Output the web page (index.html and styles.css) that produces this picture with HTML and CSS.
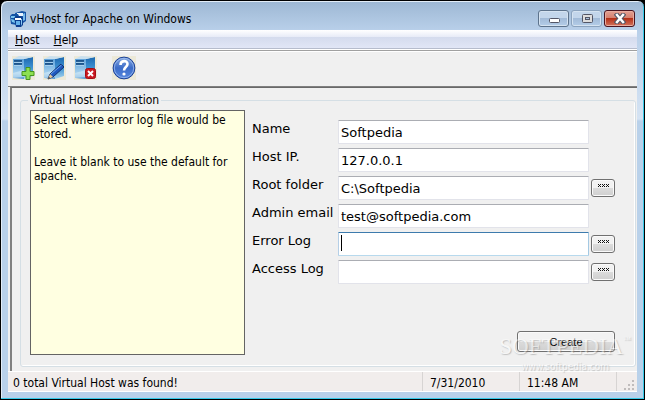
FILE: index.html
```
<!DOCTYPE html>
<html lang="en">
<head>
    <meta charset="UTF-8">
    <meta name="viewport" content="width=device-width, initial-scale=1.0">
    <title>vHost for Apache on Windows</title>
    <link rel="stylesheet" href="styles.css">
</head>
<body>
    <svg width="0" height="0" class="defs" aria-hidden="true">
        <defs>
            <linearGradient id="front" x1="0" y1="0" x2="0" y2="1">
                <stop offset="0" stop-color="#5fa3da"/>
                <stop offset=".7" stop-color="#a5d0ee"/>
                <stop offset="1" stop-color="#4d93cf"/>
            </linearGradient>
            <linearGradient id="side" x1="0" y1="0" x2="0" y2="1">
                <stop offset="0" stop-color="#1c68b0"/>
                <stop offset=".5" stop-color="#3f93d3"/>
                <stop offset="1" stop-color="#a9d5ef"/>
            </linearGradient>
            <linearGradient id="ball" x1="0" y1="0" x2="0" y2="1">
                <stop offset="0" stop-color="#87a9e0"/>
                <stop offset=".5" stop-color="#3c6cc8"/>
                <stop offset="1" stop-color="#5688df"/>
            </linearGradient>
            <g id="server">
                <path d="M1 3h11v20L1 22z" fill="url(#front)"/>
                <path d="M12 3l9-2v19l-9 3z" fill="url(#side)"/>
                <path d="M1 3l6-3 14 1-9 2z" fill="#c9dfee"/>
                <path d="M2 5h8M2 8h8" stroke="#1c568f" stroke-width="1.8"/>
                <path d="M2 6.4h8M2 9.4h8" stroke="#b9dcf3" stroke-width=".8"/>
                <path d="M1 17l11-3v7l-11 1z" fill="#d4ebf9" opacity=".6"/>
            </g>
        </defs>
    </svg>
    <div class="window">
        <div class="titlebar">
            <svg class="app-icon" width="16" height="16" viewBox="0 0 16 16">
                <path d="M5 2l7-2 4 1v9l-3 2H6z" fill="#1453a5"/>
                <path d="M7 2h6v3H7z" fill="#e8f4ff"/>
                <path d="M13 3l2-1v7l-2 1z" fill="#78b9ea"/>
                <path d="M0 5l2-2h6l1 2v8l-2 1-6-1z" fill="#1453a5"/>
                <path d="M1 5h4v2H1zM1 8l4 1v3l-3-1z" fill="#79c4ee"/>
                <path d="M4 7l2-2h5l2 2v7l-2 2H6z" fill="#0b3d8f"/>
                <path d="M5 7h6v2H5z" fill="#fff"/>
                <path d="M6 10h4v4H6z" fill="#63b0ea"/>
                <path d="M11 8h1v5l-1 2z" fill="#87c9f4"/>
            </svg>
            <h1>vHost for Apache on Windows</h1>
            <div class="window-controls">
                <button type="button" aria-label="Minimize">
                    <svg width="12" height="11" viewBox="0 0 12 11"><rect x="1.5" y="5.5" width="10" height="4" rx="1" fill="#fff" stroke="#535666"/></svg>
                </button>
                <button type="button" class="maximize" aria-label="Maximize">
                    <svg width="12" height="11" viewBox="0 0 12 11"><rect x="1.5" y="1.5" width="10" height="8" rx="1" fill="#ddd" stroke="#535666"/><rect x="4.5" y="4.5" width="4" height="2" fill="#a9c0db" stroke="#535666"/></svg>
                </button>
                <button type="button" class="close" aria-label="Close">
                    <svg width="12" height="11" viewBox="0 0 12 11"><path d="M3 2l6 7M9 2L3 9" stroke="#535666" stroke-width="4.6" stroke-linecap="square"/><path d="M3 2l6 7M9 2L3 9" stroke="#fff" stroke-width="2.5" stroke-linecap="square"/></svg>
                </button>
            </div>
        </div>

        <div class="client">
            <nav class="menubar">
                <a href="#host"><u>H</u>ost</a>
                <a href="#help"><u>H</u>elp</a>
            </nav>
            <div class="toolbar">
                <button type="button" aria-label="Add host">
                    <svg width="23" height="24" viewBox="0 0 23 24"><use href="#server"/><path d="M14 11.5h4v4h4v4h-4v4h-4v-4h-4v-4h4z" fill="#8de052" stroke="#46941f"/></svg>
                </button>
                <button type="button" aria-label="Edit host">
                    <svg width="23" height="24" viewBox="0 0 23 24"><use href="#server"/><path d="M5 23l2-5L18 8l3 3L10 21z" fill="#1e57bd" stroke="#123270"/><path d="M8 18L18.500 9" stroke="#6ba5f1"/><path d="M5 23l2-5 3 3z" fill="#e9c794"/><path d="M5 23l1-2 1 1z" fill="#222"/></svg>
                </button>
                <button type="button" aria-label="Delete host">
                    <svg width="23" height="24" viewBox="0 0 23 24"><use href="#server"/><rect x="11.500" y="12.500" width="10" height="10" rx="2" fill="#c9191f" stroke="#a30d12"/><path d="M14 15l5 5M19 15l-5 5" stroke="#fff" stroke-width="2"/></svg>
                </button>
                <button type="button" class="help" aria-label="About">
                    <svg width="24" height="24" viewBox="0 0 24 24"><circle cx="12" cy="12" r="10.900" fill="url(#ball)" stroke="#1b3f93"/><circle cx="12" cy="12" r="9.700" fill="none" stroke="#9dbcf0" stroke-width=".8"/><path d="M8.500 9c0-5 7-5 7-1 0 3-3.500 3-3.500 6.500" fill="none" stroke="#fff" stroke-width="2.600"/><circle cx="12" cy="18" r="1.600" fill="#fff"/></svg>
                </button>
            </div>

            <main class="panel">
                <fieldset>
                    <legend>Virtual Host Information</legend>
                    <div class="hint">
                        <p>Select where error log file would be stored.</p>
                        <p>Leave it blank to use the default for apache.</p>
                    </div>
                    <form class="host-form">
                        <div class="row">
                            <label for="name">Name</label>
                            <input type="text" id="name" value="Softpedia">
                        </div>
                        <div class="row">
                            <label for="ip">Host IP.</label>
                            <input type="text" id="ip" value="127.0.0.1">
                        </div>
                        <div class="row">
                            <label for="root">Root folder</label>
                            <input type="text" id="root" value="C:\Softpedia">
                            <button type="button" class="browse" aria-label="Browse root folder"><svg width="11" height="3" viewBox="0 0 11 3"><path d="M0 0l3 3M3 0L0 3M4 0l3 3M7 0L4 3M8 0l3 3M11 0L8 3" stroke="#111"/></svg></button>
                        </div>
                        <div class="row">
                            <label for="email">Admin email</label>
                            <input type="text" id="email" value="test@softpedia.com">
                        </div>
                        <div class="row focused">
                            <label for="error-log">Error Log</label>
                            <input type="text" id="error-log">
                            <button type="button" class="browse" aria-label="Browse error log"><svg width="11" height="3" viewBox="0 0 11 3"><path d="M0 0l3 3M3 0L0 3M4 0l3 3M7 0L4 3M8 0l3 3M11 0L8 3" stroke="#111"/></svg></button>
                        </div>
                        <div class="row">
                            <label for="access-log">Access Log</label>
                            <input type="text" id="access-log">
                            <button type="button" class="browse" aria-label="Browse access log"><svg width="11" height="3" viewBox="0 0 11 3"><path d="M0 0l3 3M3 0L0 3M4 0l3 3M7 0L4 3M8 0l3 3M11 0L8 3" stroke="#111"/></svg></button>
                        </div>
                        <button type="button" class="create">Create</button>
                    </form>
                </fieldset>
            </main>

            <footer class="statusbar">
                <span class="message">0 total Virtual Host was found!</span>
                <span>7/31/2010</span>
                <span>11:48 AM</span>
                <svg class="grip" width="20" height="20" viewBox="0 0 20 20"><path d="M15 8h2v2h-2zM15 12h2v2h-2zM11 12h2v2h-2zM15 16h2v2h-2zM11 16h2v2h-2zM7 16h2v2H7z" fill="#c0bcbc"/></svg>
            </footer>
        </div>
        <div class="watermark">
            <div class="brand">SOFTPEDIA<sup>™</sup></div>
            <div class="site">www.softpedia.com</div>
        </div>
    </div>
</body>
</html>
```
FILE: styles.css
```
* {
    box-sizing: border-box;
}
body {
    margin: 0;
    background: #000;
    font-family: "DejaVu Sans Condensed", "DejaVu Sans", Tahoma, sans-serif;
    font-size: 12px;
    color: #000;
}
button {
    padding: 0;
    font: inherit;
}
.defs {
    position: absolute;
}
.window {
    position: relative;
    display: flex;
    flex-direction: column;
    min-height: 100vh;
    padding: 0 7px 7px;
    border: 1px solid #000;
    border-radius: 7px 7px 0 0;
    background: linear-gradient(#9db7d3, #b9d0ea 30px, #d5e3f3 118px, #b9d1ea 120px);
    box-shadow: inset -1px -1px 0 #35c9e8, inset 1px 1px 0 #e3edf7;
}
.titlebar {
    display: flex;
    align-items: center;
    height: 29px;
    padding: 6px 2px 0;
}
.titlebar h1 {
    flex: 1;
    margin: 0 0 0 4px;
    font-size: 12px;
    font-weight: normal;
}
.window-controls {
    display: flex;
    gap: 2px;
    align-self: flex-start;
    margin-top: 3px;
}
.window-controls button {
    display: flex;
    align-items: center;
    justify-content: center;
    width: 31px;
    height: 17px;
    border: 1px solid #5d738c;
    border-radius: 3px;
    background: linear-gradient(#c3d6eb 50%, #a2bbd8 50%, #b4cde8);
    box-shadow: inset 0 0 0 1px #d5e3f1;
}
.window-controls .maximize {
    border-color: #8ba3be;
}
.window-controls .close {
    border-color: #4a1420;
    background: linear-gradient(#e3a093, #d47d6c 50%, #b53018 50%, #d2735d);
    box-shadow: inset 0 0 0 1px #e8ac9f;
}
.client {
    flex: 1;
    display: flex;
    flex-direction: column;
    background: #f0f0f0;
}
.menubar {
    display: flex;
    gap: 14px;
    height: 19px;
    padding: 0 7px;
    line-height: 20px;
    background: linear-gradient(#fff, #e7ebf7 7px, #d4dbed 7px, #e1e6f6);
    border-bottom: 1px solid #b6bccc;
}
.menubar a {
    color: #000;
    text-decoration: none;
}
.toolbar {
    display: flex;
    align-items: center;
    gap: 8px;
    height: 38px;
    padding: 0 4px 1px;
    border-top: 1px solid #fff;
    border-bottom: 1px solid #808080;
    box-shadow: inset 0 1px 0 #a0a0a0, inset 0 2px 0 #fff;
}
.toolbar button {
    display: flex;
    border: 0;
    background: #ece9d8;
}
.toolbar .help {
    margin-left: 7px;
}
.panel {
    flex: 1;
    display: flex;
    margin-left: 2px;
    padding: 5px 1px 4px 8px;
    border-top: 1px solid #696969;
    border-left: 2px solid #808080;
}
fieldset {
    flex: 1;
    display: flex;
    gap: 7px;
    min-width: 0;
    margin: 0;
    padding: 3px 20px 11px 9px;
    border: 1px solid #d5dfe5;
    border-radius: 3px;
    box-shadow: inset -1px -1px 0 #fff;
}
legend {
    height: 14px;
    margin-left: -2px;
    padding: 0 2px;
    line-height: 14px;
}
.hint {
    flex: 0 0 215px;
    padding: 2px 3px;
    border: 1px solid #646464;
    background: #ffffe1;
    line-height: 14px;
}
.hint p {
    margin: 0 0 14px;
}
.host-form {
    flex: 1;
    display: flex;
    flex-direction: column;
    gap: 4px;
    min-width: 0;
    padding: 10px 0 3px;
}
.row {
    display: grid;
    grid-template-columns: 84px 1fr 24px;
    column-gap: 2px;
    align-items: center;
    font-family: "DejaVu Sans", Verdana, sans-serif;
    font-size: 13px;
}
.row label {
    align-self: start;
    line-height: 17px;
    white-space: nowrap;
}
.row input {
    width: 100%;
    min-width: 0;
    height: 24px;
    padding: 0 2px;
    border: 1px solid #e2e3ea;
    border-top-color: #abadb3;
    border-radius: 1px;
    outline: 0;
    background: #fff;
    font: inherit;
}
.focused input {
    border-color: #3d7bad #a4c9e3 #b7d9ed #b5cfe7;
    background: linear-gradient(#000, #000) 2px 2px / 1px 16px no-repeat #fff;
}
.browse,
.create {
    border: 1px solid #707070;
    border-radius: 3px;
    background: linear-gradient(#f2f2f2 50%, #dcdcdc 50%, #cfcfcf);
    box-shadow: inset 0 0 0 1px #fafafa;
}
.browse {
    display: flex;
    justify-content: center;
    height: 18px;
    padding-top: 4px;
}
.create {
    align-self: flex-end;
    width: 98px;
    height: 21px;
    margin-top: auto;
    font-family: "Liberation Sans", Arial, sans-serif;
    font-size: 11px;
}
.statusbar {
    display: flex;
    height: 21px;
    border-top: 1px solid #fff;
    border-bottom: 1px solid #fff;
    background: #f1edec;
    line-height: 22px;
}
.statusbar span {
    width: 97px;
    padding-left: 7px;
    border-right: 1px solid #d7d4d3;
}
.statusbar .message {
    flex: 1;
    padding-left: 5px;
}
.watermark {
    position: absolute;
    right: 13px;
    bottom: 25px;
    color: #fff;
    opacity: 0.4;
    text-shadow: 1px 1px 1px #777;
    text-align: center;
    pointer-events: none;
}
.brand {
    font: 23px/26px "Liberation Serif", serif;
}
.brand sup {
    font-size: 8px;
    line-height: 8px;
    vertical-align: 12px;
}
.site {
    font: 10px/14px "DejaVu Sans Condensed", sans-serif;
}
```
